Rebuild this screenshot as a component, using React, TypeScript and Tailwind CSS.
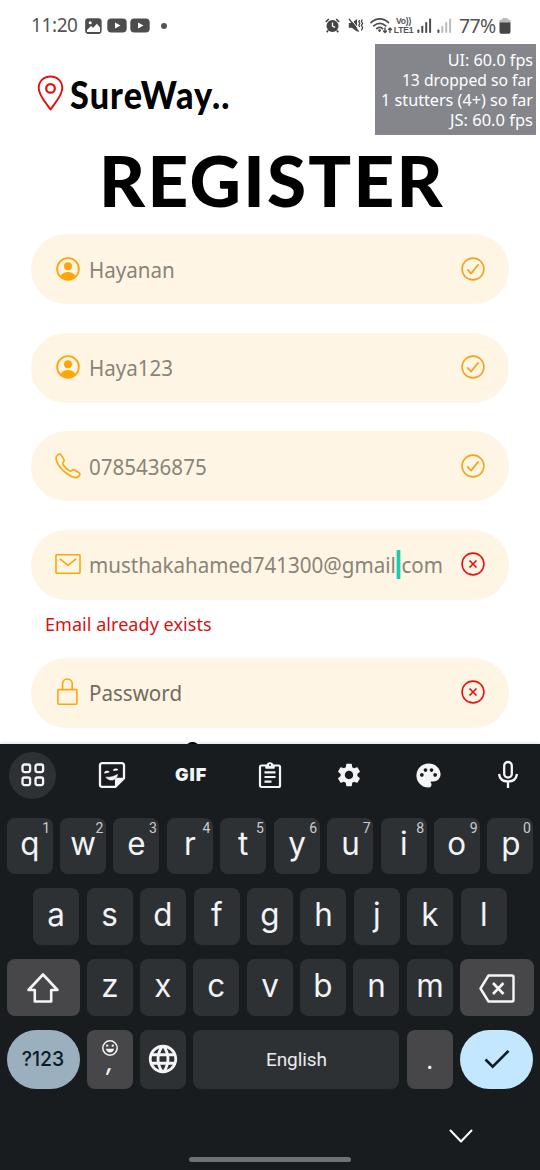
import React from "react";
import { MdLanguage, MdPalette, MdSettings } from "react-icons/md";

type IconName = "user" | "phone" | "mail" | "lock";

function FieldIcon({ name }: { name: IconName }) {
  if (name === "user") {
    return (
      <svg width="24" height="24" viewBox="0 0 24 24" fill="none">
        <circle cx="12" cy="12" r="10.9" stroke="#ffa50a" strokeWidth="1.8" />
        <circle cx="12" cy="9.2" r="4" fill="#ffa50a" />
        <path d="M4.5 19c1.7-2.7 4.3-4.1 7.5-4.1s5.800 1.400 7.500 4.100A10.500 10.500 0 0 1 12 22.500 10.500 10.500 0 0 1 4.500 19z" fill="#ffa50a" />
      </svg>
    );
  }
  if (name === "phone") {
    return (
      <svg width="26" height="26" viewBox="0 0 26 26" fill="none" stroke="#ffa50a" strokeWidth="1.6" strokeLinejoin="round" strokeLinecap="round">
        <path d="M2.600 2C3.700.9 5.200.7 6 1.900l2.800 4.500c.7 1.100.4 2-.5 2.700-.8.700-.9 1.400-.3 2.400 1.500 2.500 3.700 4.700 6.500 6.400 1 .6 1.700.5 2.400-.4.7-.9 1.600-1.200 2.700-.5l4.500 2.800c1.100.7 1 2 .1 3.100-1.200 1.300-2.900 2-4.900 1.500-3.600-.8-7.400-3.300-11-6.700C4.700 14.100 2.100 10.200 1.200 6.800.7 5 1.200 3.300 2.600 2z" />
      </svg>
    );
  }
  if (name === "mail") {
    return (
      <svg width="26" height="20" viewBox="0 0 26 20" fill="none" stroke="#ffa50a" strokeWidth="1.600" strokeLinejoin="round" strokeLinecap="round">
        <rect x="1" y=".8" width="24" height="18.400" rx=".6" />
        <path d="M5.300 5.200 13 11.300l7.700-6.100" />
      </svg>
    );
  }
  return (
    <svg width="21" height="28" viewBox="0 0 21 28" fill="none" stroke="#ffa50a" strokeWidth="1.600">
      <rect x=".9" y="11.600" width="19" height="14.600" rx="1" />
      <path d="M5.600 11.500V5.800a4.800 4.800 0 0 1 9.600 0v5.700" />
    </svg>
  );
}

function StateIcon({ ok }: { ok: boolean }) {
  return ok ? (
    <svg className="shrink-0" width="24" height="24" viewBox="0 0 24 24" fill="none" stroke="#f5a31a">
      <circle cx="12" cy="12" r="10.900" strokeWidth="1.600" />
      <path d="m6.700 12.900 3.300 3.700 7.100-8.700" strokeWidth="1.700" strokeLinejoin="round" strokeLinecap="round" />
    </svg>
  ) : (
    <svg className="shrink-0" width="24" height="24" viewBox="0 0 24 24" fill="none" stroke="#e41414">
      <circle cx="12" cy="12" r="10.900" strokeWidth="1.600" />
      <path d="m8.500 8.500 7 7m0-7-7 7" strokeWidth="1.700" />
    </svg>
  );
}

function Field({ icon, ok, children }: { icon: IconName; ok: boolean; children: React.ReactNode }) {
  return (
    <div className="flex h-[70px] shrink-0 items-center rounded-full bg-[#fff5e4] pr-6 pb-px pl-[23.500px]">
      <span className="flex w-[26px] shrink-0 justify-center">
        <FieldIcon name={icon} />
      </span>
      <span className="ml-[8.500px] min-w-0 flex-1 pt-px text-[22px] whitespace-nowrap text-[#8a8378]">
        <span className="inline-block origin-left scale-x-[0.935]">{children}</span>
      </span>
      <StateIcon ok={ok} />
    </div>
  );
}

function Signal({ bars, className }: { bars: number; className: string }) {
  return (
    <svg width="15" height="15" viewBox="0 0 15 15" className={className}>
      {[0, 1, 2, 3].map((i) => (
        <rect key={i} x={i * 3.9 + 0.4} y={11.5 - i * 3.7} width="2" height={3.5 + i * 3.7} rx=".8" fill={i < bars ? "#4d4d4d" : "#bcbcbc"} />
      ))}
    </svg>
  );
}

function Player() {
  return (
    <svg width="20" height="15" viewBox="0 0 20 15">
      <rect x=".3" y=".5" width="19.400" height="14" rx="4" fill="#4d4d4d" />
      <path d="m8 4.600 5.500 2.900L8 10.400z" fill="#fff" />
    </svg>
  );
}

function StatusBar() {
  return (
    <div className="flex h-[51px] items-center justify-between pr-[29px] pl-[31px] text-[#555]">
      <div className="flex items-center">
        <span className="w-[47px] text-[19px] tracking-[-0.4px]">11:20</span>
        <svg className="ml-[7px]" width="17" height="16" viewBox="0 0 17 16">
          <rect x=".9" y=".9" width="15" height="14.400" rx="2.500" fill="#4d4d4d" stroke="#4d4d4d" strokeWidth="1.500" />
          <path d="m2 12 4-4 2.300 1.800 3.600-4L15 9.600V14H2z" fill="#fff" />
          <circle cx="5.200" cy="4.800" r="1.500" fill="#fff" />
        </svg>
        <span className="ml-[4.500px]"><Player /></span>
        <span className="ml-[3.500px]"><Player /></span>
        <span className="ml-[11px] size-1.5 rounded-full bg-[#555]" />
      </div>
      <div className="flex items-center">
        <svg width="15" height="15" viewBox="0 0 15 15" fill="none" stroke="#454545">
          <path d="m.8 4 3-3m10.400 3-3-3M3 12.500l-1.200 1.700M12 12.500l1.200 1.700" strokeWidth="1.700" />
          <circle cx="7.500" cy="8" r="6" fill="#454545" stroke="none" />
          <path d="M7.500 4.500V8l2.600 1.300" stroke="#fff" strokeWidth="1.300" />
        </svg>
        <svg className="ml-[8px]" width="16" height="15" viewBox="0 0 16 15" fill="none" stroke="#454545">
          <path d="M.8 5h3L9 1v12.500L3.800 9.700h-3z" fill="#454545" stroke="none" />
          <path d="m2.500.4 9.600 12.800" stroke="#fff" strokeWidth="1" />
          <path d="m1 .8 9.600 12.800" strokeWidth="1.400" />
          <path d="m11.600 2-.8 1.800 1 1.700-1 1.800.8 1.800M14.200 1.500l-.8 2 1.200 2-1.200 2 1.200 2-1.200 3" strokeWidth="1.300" />
        </svg>
        <svg className="ml-[6px]" width="23" height="17" viewBox="0 0 23 17" fill="none" stroke="#4d4d4d" strokeLinecap="round">
          <path d="M1 5.600C6 .5 13.500.5 18.500 5.600M3.800 8.800c3.500-3.300 8.400-3.300 11.900 0M6.800 11.600c1.800-1.500 4-1.500 5.800 0" strokeWidth="1.700" />
          <circle cx="9.600" cy="13.500" r="1" fill="#4d4d4d" />
          <path d="M15 11v4.500m-1.500-1.500 1.500 1.500 1.500-1.500M20 15.500V11m-1.500 1.500L20 11l1.500 1.500" strokeWidth="1.400" />
        </svg>
        <span className="ml-[1px] flex w-[20px] flex-col items-center font-['Liberation_Sans'] text-[8.500px] leading-[9px] font-bold tracking-[-0.2px] whitespace-nowrap">
          <span>Vo))</span>
          <span>LTE1</span>
        </span>
        <Signal bars={4} className="ml-[3px]" />
        <Signal bars={1} className="ml-[5.500px]" />
        <span className="ml-[7px] w-[39px] text-[19.500px] tracking-[-0.700px]">77%</span>
        <svg className="ml-px" width="12" height="16" viewBox="0 0 12 16">
          <path d="M3.500 0h5v1.500H10A1.500 1.500 0 0 1 11.500 3v3H.5V3A1.500 1.500 0 0 1 2 1.500h1.500z" fill="#b9b9b9" />
          <path d="M.5 4.500h11V14a1.700 1.700 0 0 1-1.700 1.700H2.200A1.700 1.700 0 0 1 .5 14z" fill="#454545" />
        </svg>
      </div>
    </div>
  );
}

function Key({ label, hint }: { label: string; hint?: string }) {
  return (
    <div className="relative flex h-full w-[46px] shrink-0 items-center justify-center rounded-[8px] bg-[#2e3134] pb-[3px] text-[32px] leading-none text-[#f1f3f6]">
      <span className="inline-block scale-x-[0.98]">{label}</span>
      {hint && <span className="absolute top-[2px] right-[2.500px] font-['Roboto'] text-[14px] leading-[16px] text-[#c9ccd0]">{hint}</span>}
    </div>
  );
}

const topRow = "qwertyuiop".split("");
const middleRow = "asdfghjkl".split("");
const lowerRow = "zxcvbnm".split("");

function Toolbar() {
  return (
    <div className="-ml-[7px] grid h-[62px] w-[554.500px] grid-cols-7 place-items-center text-[#f4f5f7]">
      <div className="flex size-[47px] items-center justify-center rounded-full bg-[#2e3134]">
        <svg width="26" height="26" viewBox="0 0 26 26" fill="none" stroke="currentColor" strokeWidth="2.300">
          <rect x="2.500" y="2.500" width="7.600" height="7.600" rx="2" />
          <rect x="15.500" y="2.500" width="7.600" height="7.600" rx="2" />
          <rect x="2.500" y="15.500" width="7.600" height="7.600" rx="2" />
          <rect x="15.500" y="15.500" width="7.600" height="7.600" rx="2" />
        </svg>
      </div>
      <svg width="28" height="28" viewBox="0 0 28 28" fill="none" stroke="currentColor" strokeWidth="2.300" strokeLinejoin="round">
        <path d="M4 2.200h20a2 2 0 0 1 2 2v13l-8.500 8.600H4a2 2 0 0 1-2-2V4.200a2 2 0 0 1 2-2z" />
        <path d="M25.500 17.500h-5.800a2 2 0 0 0-2 2v6z" fill="currentColor" strokeWidth="1.500" />
        <path d="M7.800 16c4 .6 7.800-.3 11.800-2.700-.3 3.300-2.300 5.500-5.300 5.800-2.800.2-5.100-.8-6.500-3.100z" fill="currentColor" strokeWidth=".5" />
        <path d="M7 12.300c.3-1.700 2.800-2.200 3.800-.8M15.800 9.800c.5-1.600 2.900-1.800 3.700-.5" strokeWidth="2" />
      </svg>
      <span className="font-['Inter'] text-[18px] leading-none font-black tracking-[0.900px]">GIF</span>
      <svg width="24" height="28" viewBox="0 0 24 28" fill="none" stroke="currentColor" strokeWidth="2.200" strokeLinejoin="round">
        <rect x="2" y="4.500" width="20" height="21.500" rx="1.500" />
        <path d="M8 7V4.500h1.500a2.500 2.500 0 0 1 5 0H16V7z" fill="currentColor" strokeWidth="1.500" />
        <circle cx="12" cy="4" r="1" fill="#191c1f" stroke="none" />
        <path d="M6.500 11.300h11M6.500 16h11M6.500 20.700h7" />
      </svg>
      <MdSettings size={28} />
      <MdPalette size={29} />
      <svg width="22" height="30" viewBox="0 0 22 30" fill="none" stroke="currentColor" strokeWidth="2.300">
        <rect x="7.200" y="2" width="7.600" height="15.500" rx="3.800" />
        <path d="M2 14c.7 4.800 4.200 7.500 9 7.500s8.300-2.700 9-7.500M11 21.500V28" />
      </svg>
    </div>
  );
}

function Keyboard() {
  return (
    <div className="relative flex h-[426px] shrink-0 flex-col bg-[#191c1f] shadow-[0_-1px_3px_rgba(0,0,0,0.12)]">
      <Toolbar />
      <div className="mt-[11.500px] flex flex-col gap-[14.300px] pr-[6.500px] pl-[6.500px] font-['Inter',sans-serif]">
        <div className="flex h-[56.500px] justify-between">
          {topRow.map((letter, i) => (
            <Key key={letter} label={letter} hint={String((i + 1) % 10)} />
          ))}
        </div>
        <div className="flex h-[56.500px] justify-center gap-[7.400px]">
          {middleRow.map((letter) => (
            <Key key={letter} label={letter} />
          ))}
        </div>
        <div className="flex h-[56.500px] justify-between">
          <div className="flex w-[73px] items-center justify-center rounded-[8px] bg-[#474749]">
            <svg className="mt-px" width="34" height="32" viewBox="0 0 34 32" fill="none" stroke="#f4f5f7" strokeWidth="2.600" strokeLinejoin="round">
              <path d="M17 2.500 2.500 18h6.300v11.500h16.400V18h6.300z" />
            </svg>
          </div>
          {lowerRow.map((letter) => (
            <Key key={letter} label={letter} />
          ))}
          <div className="flex w-[73.500px] items-center justify-center rounded-[8px] bg-[#474749]">
            <svg className="mt-[3px]" width="36" height="29" viewBox="0 0 36 29" fill="none" stroke="#f4f5f7" strokeWidth="2.400" strokeLinejoin="round">
              <path d="M9.500 1.500H33a1.500 1.500 0 0 1 1.500 1.500v23a1.500 1.500 0 0 1-1.500 1.500H9.500L1.500 14.500z" />
              <path d="m14 9 10.500 11m0-11L14 20" strokeWidth="2.600" />
            </svg>
          </div>
        </div>
        <div className="flex h-[59px] justify-between">
          <div className="flex w-[73px] items-center justify-center rounded-[30px] bg-[#9bb0be] pb-px text-[20px] font-medium text-[#101c24]">
            <span className="inline-block scale-x-[0.97]">?123</span>
          </div>
          <div className="flex w-[46px] flex-col items-center rounded-[8px] bg-[#474749] pt-[9px] text-[#f4f5f7]">
            <svg width="18" height="18" viewBox="0 0 18 18" fill="none" stroke="currentColor" strokeWidth="1.500">
              <circle cx="9" cy="9" r="7.200" />
              <path d="M4.800 9.800h8.400c-.6 2.400-2 3.700-4.200 3.700S5.400 12.200 4.800 9.800z" fill="currentColor" stroke="none" />
              <circle cx="6.200" cy="6.600" r="1.200" fill="currentColor" stroke="none" />
              <circle cx="11.800" cy="6.600" r="1.200" fill="currentColor" stroke="none" />
            </svg>
            <span className="-mt-[6px] text-[24px] leading-[24px] font-medium italic">,</span>
          </div>
          <div className="flex w-[46px] items-center justify-center rounded-[8px] bg-[#2e3134] text-[#f4f5f7]">
            <MdLanguage size={34} />
          </div>
          <div className="flex w-[206px] items-center justify-center rounded-[8px] bg-[#2e3134] pt-px font-['Roboto'] text-[19px] tracking-[-0.1px] text-[#e9ecef]">English</div>
          <div className="flex w-[46px] items-center justify-center rounded-[8px] bg-[#474749] pt-[3px] text-[24px] text-[#f4f5f7]">.</div>
          <div className="flex w-[73.500px] items-center justify-center rounded-[30px] bg-[#c2e7ff]">
            <svg width="26" height="20" viewBox="0 0 26 20" fill="none" stroke="#0b1a26" strokeWidth="2.600">
              <path d="m1.500 10.500 7.200 7.200L24.500 1.800" />
            </svg>
          </div>
        </div>
      </div>
      <svg className="mt-[40px] ml-[449px]" width="24" height="14" viewBox="0 0 24 14" fill="none" stroke="#fff" strokeWidth="2" strokeLinecap="round" strokeLinejoin="round">
        <path d="m1.500 1.500 10.500 11 10.500-11" />
      </svg>
      <div className="mt-[14px] ml-[189px] h-[5.500px] w-[162px] rounded-full bg-[#707173]" />
    </div>
  );
}

export default function App() {
  return (
    <div className="relative flex h-[1170px] w-[540px] flex-col overflow-hidden bg-white font-['Noto_Sans',sans-serif]">
      <StatusBar />
      <div className="flex h-[693px] flex-col overflow-hidden">
        <div className="flex h-[85px] shrink-0 items-start pt-[24px] pl-[37px]">
          <svg width="27" height="37" viewBox="0 0 27 37" fill="none" stroke="#e60d0d" strokeWidth="1.900" strokeLinejoin="round">
            <path d="M13.500 1.500C6.500 1.500 1.700 6.500 1.700 13c0 7.500 7 14.500 11.800 21.500C18.300 27.500 25.300 20.500 25.300 13c0-6.500-4.800-11.500-11.800-11.500z" />
            <circle cx="13.500" cy="13.400" r="4.300" strokeWidth="2.200" />
          </svg>
          <span className="-mt-[2px] ml-[6px] origin-left scale-x-[0.9] font-['Lato'] text-[38px] leading-[43px] font-black tracking-[1.200px] text-black">SureWay..</span>
        </div>
        <h1 className="flex h-[98px] shrink-0 justify-center pt-[8px] pl-[4px] font-['Lato'] text-[71px] leading-[71px] font-black tracking-[2.300px] text-black">REGISTER</h1>
        <div className="flex flex-col gap-[28.500px] px-[31px]">
          <Field icon="user" ok>Hayanan</Field>
          <Field icon="user" ok>Haya123</Field>
          <Field icon="phone" ok>0785436875</Field>
          <Field icon="mail" ok={false}>
            musthakahamed741300@gmail
            <span className="relative">
              .<span className="absolute top-[1px] left-[1px] h-[29px] w-[3.500px] bg-[#1fcbb0]" />
            </span>
            com
          </Field>
        </div>
        <p className="h-[58px] shrink-0 pt-[11.500px] pl-[45px] text-[18px] tracking-[0.050px] text-[#d41316]">Email already exists</p>
        <div className="px-[31px]">
          <Field icon="lock" ok={false}>
            <span className="text-[#716b60]">Password</span>
          </Field>
        </div>
        <div className="mt-[14.500px] ml-[186px] h-3 w-[13px] shrink-0 rounded-full bg-black" />
      </div>
      <Keyboard />
      <div className="absolute top-[44px] right-[4px] flex h-[91px] w-[161px] flex-col items-end bg-[#85868c] pt-[6px] pr-[3px] text-[16.500px] leading-[20px] whitespace-nowrap text-white">
        <p className="origin-right scale-x-[0.98]">UI: 60.0 fps</p>
        <p className="origin-right scale-x-[0.95]">13 dropped so far</p>
        <p className="origin-right scale-x-[0.98]">1 stutters (4+) so far</p>
        <p className="origin-right">JS: 60.0 fps</p>
      </div>
    </div>
  );
}
